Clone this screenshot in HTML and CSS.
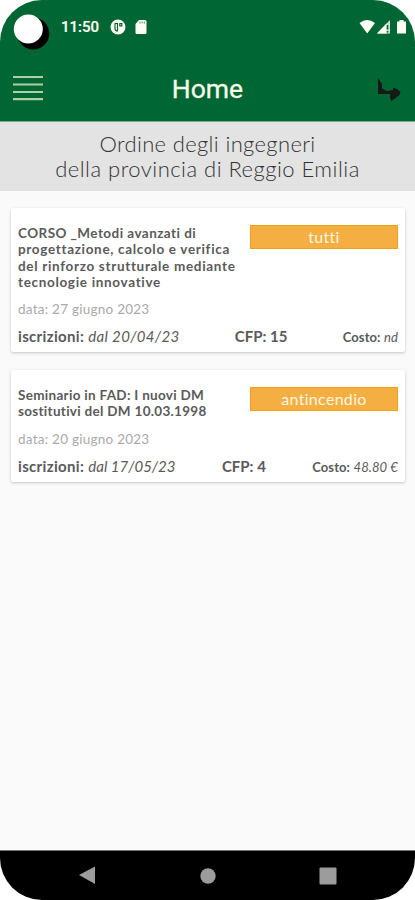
FILE: index.html
```html
<!DOCTYPE html>
<html lang="it">
<head>
    <meta charset="UTF-8">
    <title>Home</title>
    <link rel="stylesheet" href="styles.css">
</head>
<body>
    <div class="phone">
        <header class="top">
            <div class="status">
                <svg class="camera" width="38" height="38" viewBox="0 0 38 38">
                    <circle cx="21.200" cy="20.500" r="16" fill="#000"/>
                    <circle cx="16.300" cy="16" r="14.500" fill="#fff"/>
                </svg>
                <span class="time">11:50</span>
                <svg class="app-icon" width="16" height="16" viewBox="0 0 16 16">
                    <circle cx="8" cy="8" r="7.500" fill="#fffff5"/>
                    <path d="M5 5V9.500Q5 12 7.500 12V4.500H4.500M9.800 4.500H11.800V6.800H9.800Z" fill="none" stroke="#006633" stroke-width="1.200"/>
                </svg>
                <svg class="sd-icon" width="12" height="14" viewBox="0 0 12 14">
                    <path d="M4 0H10Q11.500 0 11.500 1.500V12.500Q11.500 14 10 14H2Q.5 14 .5 12.500V4Z" fill="#fffff5"/>
                    <path d="M5 1.500V3.500M7.200 1.500V3.500M9.400 1.500V3.500" stroke="#6fa282" stroke-width="1.200"/>
                </svg>
                <svg class="signal" width="48" height="16" viewBox="0 0 48 16">
                    <path d="M.5 4Q8 -2 16 4L8.200 14.500Z" fill="#fffff5"/>
                    <path d="M18 14.500L31 1V14.500Z" fill="#c9dfcd"/>
                    <path d="M18 14.500L27.500 4.500V14.500Z" fill="#fffff5"/>
                    <path d="M28.500 6V10.500M28.500 12V13.500" stroke="#006633" stroke-width="1.600"/>
                    <path d="M38 2.500H40.500V1H44.500V2.500H47V14.500H38Z" fill="#fffff5"/>
                </svg>
            </div>
            <nav class="bar">
                <svg class="menu" width="30" height="26" viewBox="0 0 30 26">
                    <path d="M0 2H30M0 9.500H30M0 17H30M0 24.200H30" stroke="#afd0a2" stroke-width="2.200"/>
                </svg>
                <h1>Home</h1>
                <svg class="exit" width="24" height="24" viewBox="0 0 24 24">
                    <path d="M1 0L5 6V10.500L10 13L16 12V9.500L20 11L23.500 14L22.500 17L14.500 23L13 20.500V16H1Z" fill="#151a17"/>
                </svg>
            </nav>
        </header>
        <h2 class="order"><span class="order-first">Ordine degli ingegneri</span><br>della provincia di Reggio Emilia</h2>
        <main>
            <article class="card">
                <div class="head">
                    <h3>CORSO _Metodi avanzati di<br><span class="wide">progettazione, calcolo e verifica<br>del rinforzo strutturale mediante<br>tecnologie innovative</span></h3>
                    <span class="tag">tutti</span>
                </div>
                <p class="date">data: 27 giugno 2023</p>
                <div class="info">
                    <span class="signup"><b>iscrizioni:</b> <i>dal 20/04/23</i></span>
                    <span class="cfp"><b>CFP: 15</b></span>
                    <span class="cost"><b>Costo:</b> <i>nd</i></span>
                </div>
            </article>
            <article class="card">
                <div class="head">
                    <h3><span class="tight">Seminario in FAD: I nuovi DM<br>sostitutivi del DM 10.03.1998</span></h3>
                    <span class="tag">antincendio</span>
                </div>
                <p class="date">data: 20 giugno 2023</p>
                <div class="info">
                    <span class="signup"><b>iscrizioni:</b> <i class="tight">dal 17/05/23</i></span>
                    <span class="cfp"><b>CFP: 4</b></span>
                    <span class="cost"><b>Costo:</b> <i>48.80 €</i></span>
                </div>
            </article>
        </main>
        <footer class="nav-keys">
            <svg width="17" height="19" viewBox="0 0 17 19"><path d="M0 9L16 .5V18Z" fill="#9c9c9c"/></svg>
            <svg width="16" height="16" viewBox="0 0 16 16"><circle cx="8" cy="8" r="7.700" fill="#9c9c9c"/></svg>
            <svg width="18" height="18" viewBox="0 0 18 18"><rect x=".5" y=".5" width="17" height="17" rx="1" fill="#9c9c9c"/></svg>
        </footer>
    </div>
</body>
</html>
```

FILE: styles.css
```css
* {
    box-sizing: border-box;
}

body {
    margin: 0;
    background: #fff;
    font-family: Lato, "Open Sans", sans-serif;
}

h1, h2, h3, p {
    margin: 0;
}

svg {
    display: block;
    flex: none;
}

.phone {
    display: flex;
    flex-direction: column;
    width: 415px;
    height: 900px;
    overflow: hidden;
    border-radius: 42px;
    background: #fafafa;
}

.top {
    height: 122px;
    background: #006633;
    border-bottom: 1px solid #7ba68c;
}

.status {
    display: flex;
    align-items: center;
    height: 54px;
    padding: 0 12px;
    color: #fffff5;
}

.camera {
    margin-top: 9px;
}

.time {
    width: 40px;
    margin-left: 11px;
    font: 500 15px Roboto, sans-serif;
    -webkit-text-stroke: 0.2px #fffff5;
}

.app-icon {
    margin-left: 9px;
}

.sd-icon {
    margin-left: 9px;
}

.signal {
    margin-left: auto;
    margin-right: -4px;
}

.bar {
    display: flex;
    align-items: center;
    justify-content: space-between;
    height: 67px;
    padding: 0 14px 0 13px;
}

.bar h1 {
    margin: 2px 0 0 -5px;
    color: #f8fbea;
    font: 400 26.500px Roboto, sans-serif;
    -webkit-text-stroke: 0.3px #f8fbea;
}

.exit {
    margin-top: 5px;
}

.order {
    height: 69px;
    padding-top: 9px;
    background: #e3e3e3;
    color: #333;
    font-size: 22px;
    font-weight: 300;
    line-height: 25px;
    letter-spacing: 0.48px;
    text-align: center;
    white-space: nowrap;
}

.order-first {
    letter-spacing: 0.35px;
}

main {
    flex: 1;
    display: flex;
    flex-direction: column;
    gap: 18px;
    padding: 17px 10px 0 11px;
}

.card {
    height: 144px;
    padding: 17px 7px 0;
    background: #fff;
    border-radius: 2px;
    box-shadow: 0 1px 3px rgba(0, 0, 0, 0.22);
    color: #5a5a5a;
}

.card + .card {
    height: 112px;
    padding-top: 17px;
}

.head {
    display: flex;
    justify-content: space-between;
}

.head h3 {
    width: 225px;
    font-size: 13.500px;
    font-weight: 700;
    line-height: 16.300px;
    letter-spacing: 0.45px;
    white-space: nowrap;
}

.head .wide {
    letter-spacing: 0.68px;
}

.head .tight {
    letter-spacing: 0.3px;
}

.tag {
    width: 148px;
    height: 24px;
    border: 1px solid #f0a21b;
    background: #f4ae42;
    color: #fff6e2;
    font-size: 16px;
    line-height: 22px;
    letter-spacing: 0.3px;
    text-align: center;
}

.date {
    margin-top: 10px;
    color: #aaa;
    font-size: 13.500px;
    line-height: 18px;
    letter-spacing: 0.25px;
}

.info {
    display: flex;
    justify-content: space-between;
    align-items: baseline;
    margin-top: 8px;
    font-size: 15px;
    line-height: 20px;
    white-space: nowrap;
}

.signup {
    letter-spacing: 0.33px;
}

.signup .tight {
    letter-spacing: 0;
}

.cost {
    font-size: 13px;
    letter-spacing: 0.1px;
}

.nav-keys {
    display: flex;
    align-items: center;
    justify-content: space-between;
    height: 50px;
    padding: 0 78px 0 79px;
    border-top: 1px solid #777;
    background: #000;
}
```
